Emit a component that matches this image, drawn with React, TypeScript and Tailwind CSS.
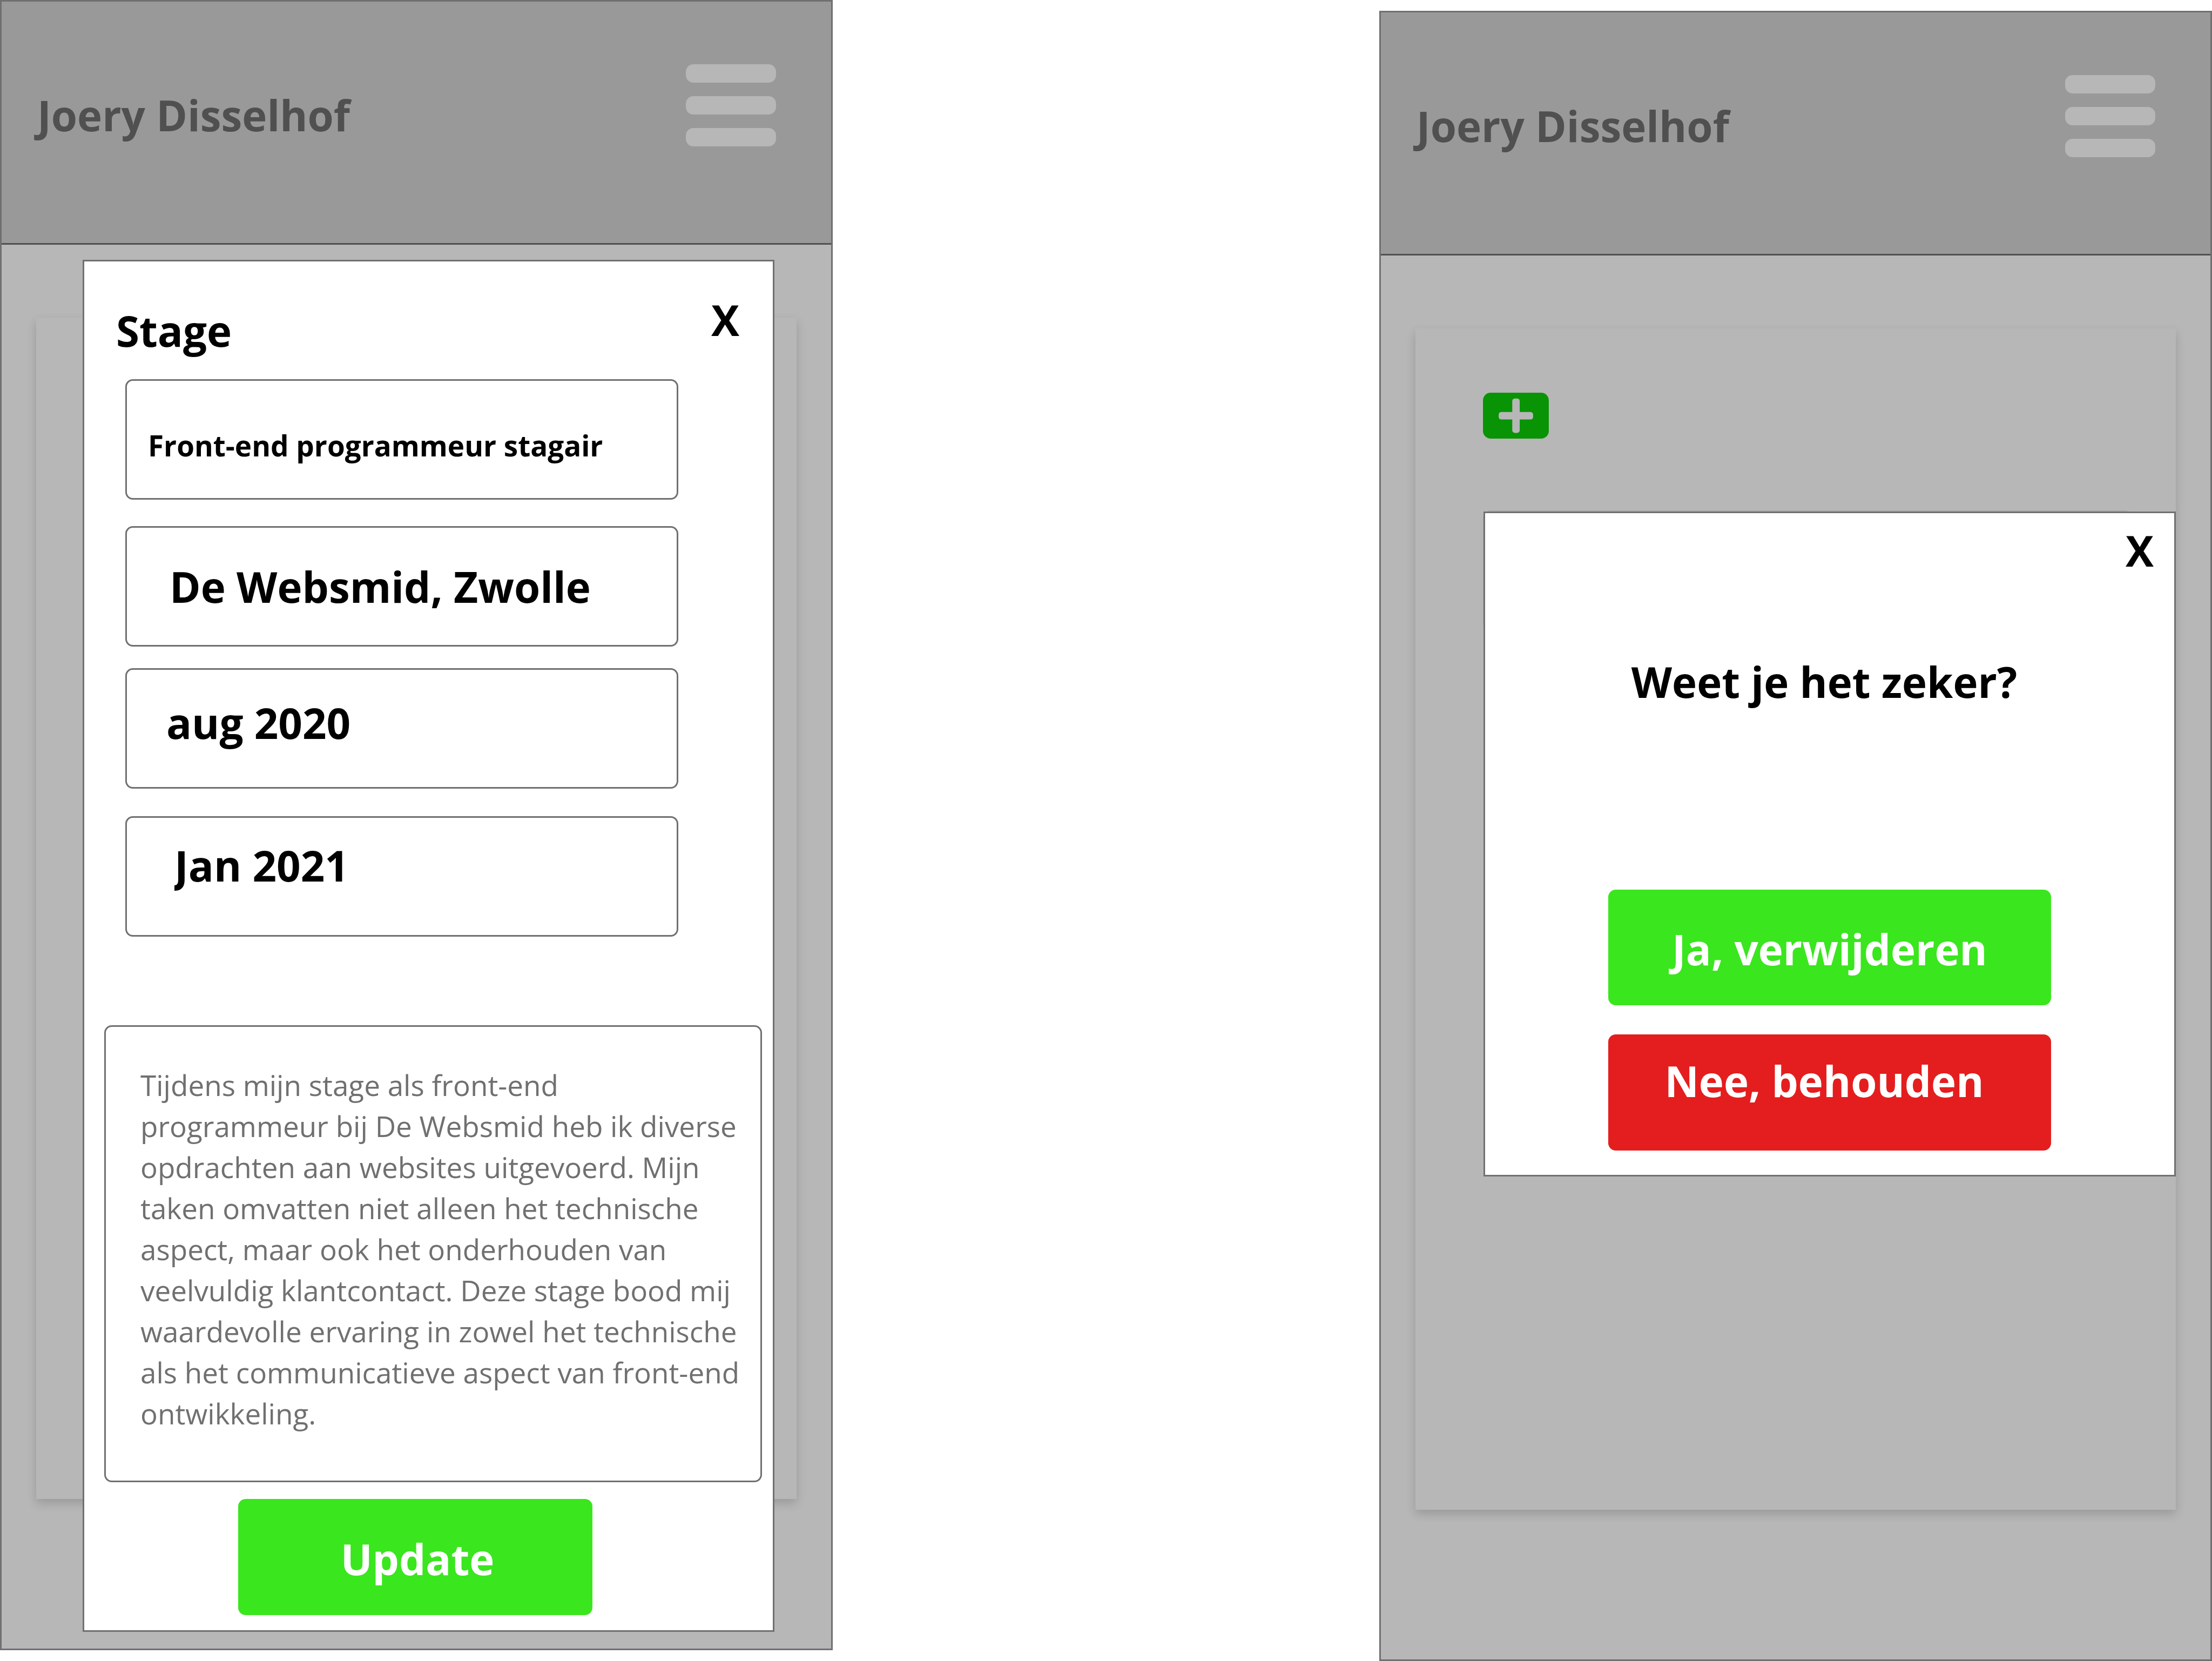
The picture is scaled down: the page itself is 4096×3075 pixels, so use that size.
import type { ReactNode } from "react";

function Panel({ className, children, modal }: { className: string; children?: ReactNode; modal: ReactNode }) {
  return (
    <section className={"relative w-[37.65%] border-3 border-[#707070] bg-[#b7b7b7] " + className}>
      <header className="flex h-[450px] items-start justify-between border-b-3 border-[#505050] bg-[#999999] pl-[66px] pr-[102px]">
        <h1 className="pt-[155px] text-[78px] leading-[110px] font-bold text-[#505050]">Joery Disselhof</h1>
        <button type="button" aria-label="Menu" className="mt-[116px] flex w-[167px] flex-col gap-[25px]">
          <span className="h-[34px] w-full rounded-[14px] bg-[#b7b7b7]" />
          <span className="h-[34px] w-full rounded-[14px] bg-[#b7b7b7]" />
          <span className="h-[34px] w-full rounded-[14px] bg-[#b7b7b7]" />
        </button>
      </header>
      <div className="px-16 pt-[135px] pb-[277px]">
        <div className="min-h-[2187px] pt-[119px] pl-[125px] shadow-[0_8px_17px_rgba(0,0,0,0.16)]">{children}</div>
      </div>
      {modal}
    </section>
  );
}

function EditModal() {
  return (
    <div role="dialog" aria-label="Stage" className="absolute top-[478px] right-[105px] left-[150px] border-3 border-[#707070] bg-white pb-7">
      <div className="flex items-start justify-between pt-[53px] pr-[62px] pl-[59px]">
        <h2 className="pt-5 text-[78px] leading-[110px] font-bold">Stage</h2>
        <button type="button" aria-label="Sluiten" className="text-[78px] leading-[110px] font-bold">X</button>
      </div>
      <form className="flex flex-col">
        <div className="mt-[35px] mr-[175px] ml-[76px] flex flex-col">
          <input aria-label="Functie" defaultValue="Front-end programmeur stagair" className="rounded-[14px] border-3 border-[#707070] pt-[82px] pb-[59px] pl-[39px] text-[53px] leading-[76px] font-bold" />
          <input aria-label="Bedrijf" defaultValue="De Websmid, Zwolle" className="mt-[49px] rounded-[14px] border-3 border-[#707070] pt-[54px] pb-[53px] pl-[79px] text-[78px] leading-[110px] font-bold" />
          <input aria-label="Begin" defaultValue="aug 2020" className="mt-10 rounded-[14px] border-3 border-[#707070] pt-[43px] pb-16 pl-[73px] text-[78px] leading-[110px] font-bold" />
          <input aria-label="Einde" defaultValue="Jan 2021" className="mt-[51px] rounded-[14px] border-3 border-[#707070] pt-[33px] pb-[74px] pl-[88px] text-[78px] leading-[110px] font-bold" />
        </div>
        <textarea
          aria-label="Omschrijving"
          rows={9}
          defaultValue="Tijdens mijn stage als front-end programmeur bij De Websmid heb ik diverse opdrachten aan websites uitgevoerd. Mijn taken omvatten niet alleen het technische aspect, maar ook het onderhouden van veelvuldig klantcontact. Deze stage bood mij waardevolle ervaring in zowel het technische als het communicatieve aspect van front-end ontwikkeling."
          className="mt-[164px] mr-5 ml-[37px] resize-none overflow-hidden rounded-[14px] border-3 border-[#707070] pt-[70px] pr-7 pb-[86px] pl-16 text-[53px] leading-[76px] text-[#707070]"
        />
        <button type="button" className="mt-[31px] ml-[285px] w-[656px] rounded-[14px] bg-[#3ae61e] pt-14 pb-[49px] pl-2 text-[78px] leading-[110px] font-bold text-white">
          Update
        </button>
      </form>
    </div>
  );
}

function ConfirmModal() {
  return (
    <div role="dialog" aria-label="Weet je het zeker?" className="absolute top-[924px] right-16 left-[190px] flex flex-col border-3 border-[#707070] bg-white pt-3.5 pb-[45px]">
      <button type="button" aria-label="Sluiten" className="mr-[38px] self-end text-[78px] leading-[110px] font-bold">X</button>
      <h2 className="mt-[133px] pr-5 text-center text-[78px] leading-[110px] font-bold">Weet je het zeker?</h2>
      <div className="mt-[330px] flex flex-col items-center gap-[54px]">
        <button type="button" className="w-[820px] rounded-[14px] bg-[#3ae61e] pt-[55px] pb-[49px] text-[78px] leading-[110px] font-bold text-white">
          Ja, verwijderen
        </button>
        <button type="button" className="w-[820px] rounded-[14px] bg-[#e41e1e] pt-[31px] pr-5 pb-[74px] text-[78px] leading-[110px] font-bold text-white">
          Nee, behouden
        </button>
      </div>
    </div>
  );
}

export default function App() {
  return (
    <main className="flex items-start justify-between bg-white font-['Open_Sans',sans-serif] text-black">
      <Panel className="" modal={<EditModal />} />
      <Panel className="mt-5" modal={<ConfirmModal />}>
        <button type="button" aria-label="Toevoegen" className="block">
          <svg viewBox="0 0 172 120" className="h-[85px] w-[122px]" aria-hidden="true">
            <rect width="172" height="120" rx="20" fill="#089404" />
            <rect x="76.5" y="15" width="19.5" height="90" rx="7" fill="#b7b7b7" />
            <rect x="41" y="50.5" width="90" height="19.5" rx="7" fill="#b7b7b7" />
          </svg>
        </button>
        <div className="mt-[133px] mr-20 h-[223px] rounded-[14px] bg-[#a8a8a8]" />
      </Panel>
    </main>
  );
}
